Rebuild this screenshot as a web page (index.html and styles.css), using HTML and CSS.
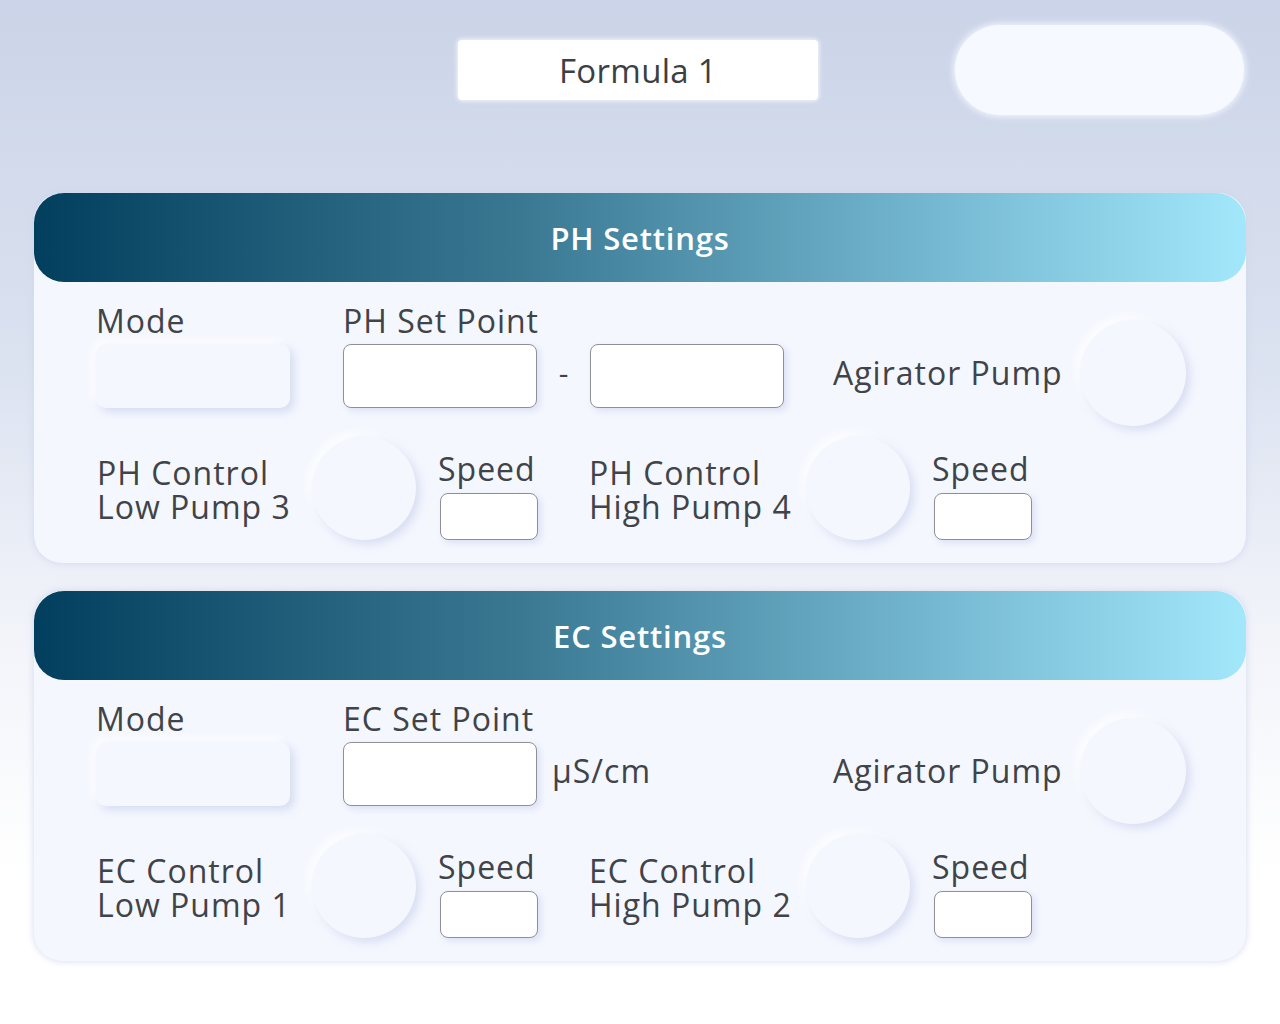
FILE: index.html
```html
<!DOCTYPE html>
<html lang="en">
  <head>
    <meta charset="UTF-8" />
    <title>Formula Settings</title>
    <link rel="stylesheet" href="styles.css">
  </head>
  <body>
    <div class="page">
      <div class="topbar">
        <div class="formula">Formula 1</div>
        <div class="pill"></div>
      </div>

      <section class="card">
        <h2 class="card-header">PH Settings</h2>
        <div class="row-main">
          <span class="label col-mode">Mode</span>
          <span class="label col-point">PH Set Point</span>
          <div class="mode-box"></div>
          <input class="field" type="text" />
          <span class="dash">-</span>
          <input class="field" type="text" />
          <span class="label pump-label">Agirator Pump</span>
          <div class="knob knob-big"></div>
        </div>
        <div class="row-sub">
          <span class="label stack-label">PH Control<br>Low Pump 3</span>
          <div class="knob"></div>
          <div class="speed">
            <span class="label">Speed</span>
            <input class="field field-small" type="text" />
          </div>
          <span class="label stack-label stack-wide">PH Control<br>High Pump 4</span>
          <div class="knob"></div>
          <div class="speed">
            <span class="label">Speed</span>
            <input class="field field-small" type="text" />
          </div>
        </div>
      </section>

      <section class="card">
        <h2 class="card-header">EC Settings</h2>
        <div class="row-main">
          <span class="label col-mode">Mode</span>
          <span class="label col-point">EC Set Point</span>
          <div class="mode-box"></div>
          <input class="field" type="text" />
          <span class="label unit">µS/cm</span>
          <span class="label pump-label">Agirator Pump</span>
          <div class="knob knob-big"></div>
        </div>
        <div class="row-sub">
          <span class="label stack-label">EC Control<br>Low Pump 1</span>
          <div class="knob"></div>
          <div class="speed">
            <span class="label">Speed</span>
            <input class="field field-small" type="text" />
          </div>
          <span class="label stack-label stack-wide">EC Control<br>High Pump 2</span>
          <div class="knob"></div>
          <div class="speed">
            <span class="label">Speed</span>
            <input class="field field-small" type="text" />
          </div>
        </div>
      </section>
    </div>
  </body>
</html>
```

FILE: styles.css
```css
html,
body {
  margin: 0;
  min-height: 100%;
}
body {
  font-family: "Open Sans", "Noto Sans", sans-serif;
  color: #404348;
  background: linear-gradient(180deg, #cbd4e8 0%, #dbe2f0 35%, #f2f4fa 62%, #ffffff 85%);
  min-height: 1024px;
}
.page {
  padding: 25px 0 40px 34px;
  width: 1212px;
}
.topbar {
  display: grid;
  grid-template-columns: 1fr 360px 1fr;
  align-items: center;
  height: 90px;
  margin-bottom: 78px;
  margin-left: -34px;
  width: 1280px;
}
.formula {
  grid-column: 2;
  height: 60px;
  background-color: #ffffff;
  border-radius: 4px;
  box-shadow: 0 0 4px 1px rgba(255, 255, 255, 0.8);
  display: flex;
  align-items: center;
  justify-content: center;
  font-size: 33px;
  letter-spacing: 0.3px;
  color: #3c3f44;
  margin-left: -2px;
  margin-right: 2px;
}
.pill {
  grid-column: 3;
  justify-self: end;
  margin-right: 36px;
  width: 289px;
  height: 90px;
  border-radius: 45px;
  background-color: #f6f9ff;
  box-shadow: 0 0 6px 2px rgba(248, 250, 255, 0.8);
}
.card {
  background-color: #f4f7fe;
  border-radius: 28px;
  box-shadow: 0 0 6px 1px rgba(205, 213, 238, 0.7);
  padding-bottom: 23px;
  margin-bottom: 28px;
}
.card-header {
  margin: 0;
  height: 89px;
  border-radius: 30px;
  background: linear-gradient(90deg, #023f5e 0%, #3a7892 40%, #76b9d2 75%, #a2e7fa 100%);
  color: #ffffff;
  font-size: 31px;
  font-weight: 600;
  letter-spacing: 0.8px;
  display: flex;
  align-items: center;
  justify-content: center;
}
.label {
  font-size: 32px;
  line-height: 40px;
  letter-spacing: 1px;
  white-space: nowrap;
}
.row-main {
  display: grid;
  grid-template-columns: 247px 194px 53px 194px 1fr 106px;
  grid-template-rows: 40px 64px;
  row-gap: 3px;
  padding: 19px 60px 0 62px;
}
.col-mode {
  grid-row: 1;
  grid-column: 1;
}
.col-point {
  grid-row: 1;
  grid-column: 2 / span 3;
}
.mode-box {
  grid-row: 2;
  grid-column: 1;
  width: 194px;
  border-radius: 10px;
  background-color: #f4f7fe;
  box-shadow: 4px 4px 8px rgba(190, 198, 234, 0.55),
    -4px -4px 8px rgba(255, 255, 255, 0.9);
}
.field {
  grid-row: 2;
  box-sizing: border-box;
  width: 194px;
  height: 64px;
  margin: 0;
  background-color: #ffffff;
  border: 1px solid #8e9096;
  border-radius: 8px;
  box-shadow: 3px 3px 6px rgba(190, 198, 234, 0.45);
  font-family: inherit;
  font-size: 24px;
}
.field-small {
  width: 98px;
  height: 47px;
  margin-left: 2px;
}
.dash {
  grid-row: 2;
  grid-column: 3;
  align-self: center;
  text-align: center;
  font-size: 30px;
  margin-bottom: 8px;
}
.unit {
  grid-row: 2;
  grid-column: 3 / span 2;
  align-self: center;
  padding-left: 15px;
  margin-bottom: 6px;
}
.pump-label {
  grid-row: 2;
  grid-column: 5;
  align-self: center;
  padding-left: 49px;
  margin-bottom: 6px;
}
.knob {
  width: 104px;
  height: 104px;
  border-radius: 50%;
  background-color: #f4f7fe;
  box-shadow: 4px 4px 8px rgba(190, 198, 234, 0.5),
    -4px -4px 8px rgba(255, 255, 255, 0.95);
  flex-shrink: 0;
}
.knob-big {
  grid-row: 2;
  grid-column: 6;
  align-self: center;
  width: 106px;
  height: 106px;
  margin-bottom: 6px;
}
.row-sub {
  display: flex;
  align-items: center;
  margin-top: 28px;
  padding-left: 63px;
}
.stack-label {
  width: 215px;
  line-height: 34px;
  margin-top: 4px;
}
.stack-wide {
  width: 217px;
}
.row-sub .knob {
  margin-right: 22px;
}
.speed {
  align-self: flex-end;
  display: flex;
  flex-direction: column;
  gap: 4px;
  width: 151px;
}
```
